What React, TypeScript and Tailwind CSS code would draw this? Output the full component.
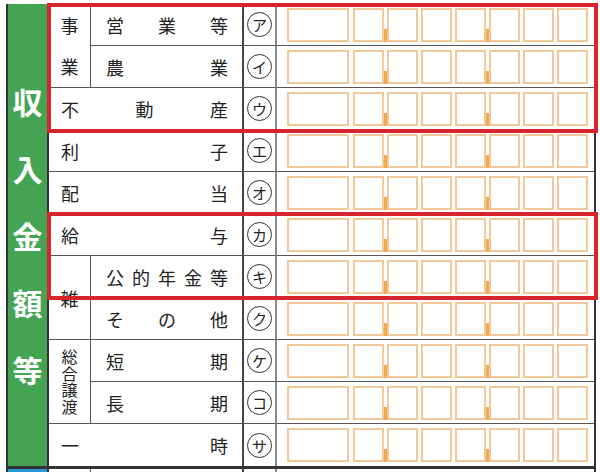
const BOX = 'h-[34px] border-2 border-[#f3c898] bg-white shrink-0';

function Tick() {
    return (
        <div className="w-[3px] h-[34px] flex items-end shrink-0">
            <div className="w-[3px] h-[13px] bg-[#f5a94f]" />
        </div>
    );
}

function Digits({ last }: { last?: boolean }) {
    return (
        <div className={`flex items-center pl-[10px] ${last ? '' : 'border-b border-[#555]'}`}>
            <div className={`w-[62px] ${BOX}`} />
            <div className="w-[4px] shrink-0" />
            <div className={`w-[31px] ${BOX}`} />
            <Tick />
            <div className={`w-[31px] ${BOX}`} />
            <div className="w-[3px] shrink-0" />
            <div className={`w-[31px] ${BOX}`} />
            <div className="w-[3px] shrink-0" />
            <div className={`w-[31px] ${BOX}`} />
            <Tick />
            <div className={`w-[31px] ${BOX}`} />
            <div className="w-[3px] shrink-0" />
            <div className={`w-[31px] ${BOX}`} />
            <div className="w-[3px] shrink-0" />
            <div className={`w-[31px] ${BOX}`} />
        </div>
    );
}

function Mark({ kana, last }: { kana: string; last?: boolean }) {
    return (
        <div className={`flex items-center justify-center border-r-2 border-r-[#8a8a8a] ${last ? '' : 'border-b border-b-[#555]'}`}>
            <div className="w-[25px] h-[25px] rounded-full border-[1.5px] border-[#333] flex items-center justify-center text-[15px] leading-none">
                {kana}
            </div>
        </div>
    );
}

// label spread across its cell, like 営　業　等
function Label({ text, wide, last }: { text: string; wide?: boolean; last?: boolean }) {
    return (
        <div
            className={`flex items-center justify-between border-r-2 border-r-[#444] text-[18px] leading-none ${wide ? 'col-span-2 pl-[12px] pr-[14px]' : 'pl-[15px] pr-[14px]'} ${last ? '' : 'border-b border-b-[#555]'}`}
        >
            {text.split('').map((c, i) => (
                <span key={i}>{c}</span>
            ))}
        </div>
    );
}

export default function App() {
    return (
        <div className="relative w-[600px] h-[472px] overflow-hidden bg-white pl-[6px] pt-[4px] font-['Noto_Sans_CJK_JP',sans-serif] text-[#222]">
            <div className="flex w-[590px] border-x-2 border-b-[3px] border-[#333]">
                {/* 収入金額等 */}
                <div className="w-[41px] shrink-0 border-r-2 border-[#333] bg-[#44a454] flex flex-col items-center justify-center gap-[37px] text-white text-[30px] font-bold leading-[30px]">
                    {'収入金額等'.split('').map((c) => (
                        <span key={c}>{c}</span>
                    ))}
                </div>

                <div className="grid grid-cols-[42px_153px_33px_317px] grid-rows-[repeat(11,42px)]">
                    {/* 事業 */}
                    <div className="row-span-2 flex flex-col border-r border-b border-[#555] text-[18px] leading-none">
                        <div className="flex-1 flex items-center justify-center">事</div>
                        <div className="flex-1 flex items-center justify-center">業</div>
                    </div>
                    <Label text="営業等" />
                    <Mark kana="ア" />
                    <Digits />
                    <Label text="農業" />
                    <Mark kana="イ" />
                    <Digits />

                    <Label text="不動産" wide />
                    <Mark kana="ウ" />
                    <Digits />
                    <Label text="利子" wide />
                    <Mark kana="エ" />
                    <Digits />
                    <Label text="配当" wide />
                    <Mark kana="オ" />
                    <Digits />
                    <Label text="給与" wide />
                    <Mark kana="カ" />
                    <Digits />

                    {/* 雑 */}
                    <div className="row-span-2 flex items-center justify-center border-r border-b border-[#555] text-[18px] leading-none">
                        雑
                    </div>
                    <Label text="公的年金等" />
                    <Mark kana="キ" />
                    <Digits />
                    <Label text="その他" />
                    <Mark kana="ク" />
                    <Digits />

                    {/* 総合譲渡 */}
                    <div className="row-span-2 flex items-center justify-center border-r border-b border-[#555]">
                        <span className="[writing-mode:vertical-rl] text-[16px] leading-none tracking-[0.5px]">総合譲渡</span>
                    </div>
                    <Label text="短期" />
                    <Mark kana="ケ" />
                    <Digits />
                    <Label text="長期" />
                    <Mark kana="コ" />
                    <Digits />

                    <Label text="一時" wide last />
                    <Mark kana="サ" last />
                    <Digits last />
                </div>
            </div>

            {/* next row, cut off */}
            <div className="flex w-[590px] h-[12px] border-x-2 border-[#333]">
                <div className="w-[41px] shrink-0 border-r-2 border-[#333] bg-[#2a9ad6]" />
                <div className="w-[42px] shrink-0 border-r border-[#555]" />
                <div className="w-[153px] shrink-0 border-r-2 border-[#444]" />
                <div className="w-[33px] shrink-0 border-r-2 border-[#8a8a8a]" />
                <div className="flex-1" />
            </div>

            {/* red highlight frames */}
            <div className="absolute left-[47px] top-[3px] w-[551px] h-[130px] border-4 border-[#d8242c]" />
            <div className="absolute left-[47px] top-[212px] w-[551px] h-[88px] border-4 border-[#d8242c]" />
        </div>
    );
}
